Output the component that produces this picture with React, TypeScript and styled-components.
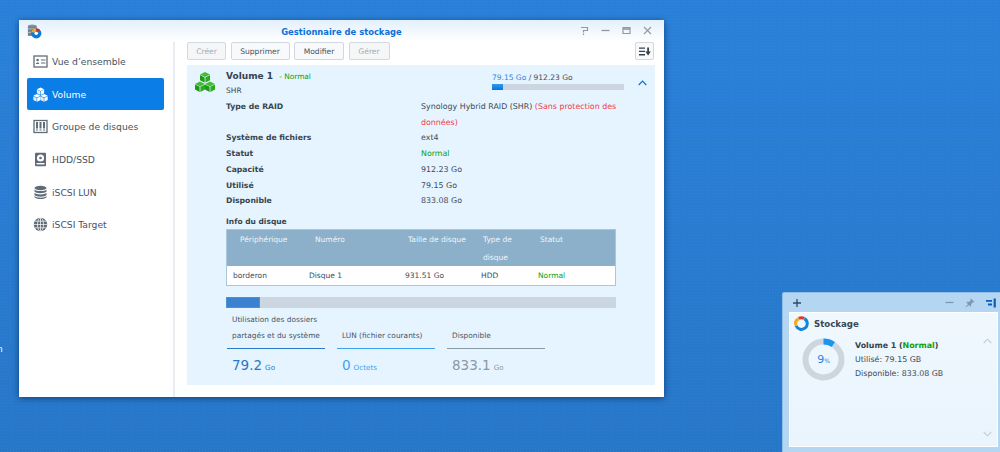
import { FC, ReactNode } from 'react';
import styled, { createGlobalStyle } from 'styled-components';

const GlobalStyle = createGlobalStyle`
  html, body {
    margin: 0;
    padding: 0;
    height: 100%;
  }
  #root {
    height: 100%;
  }
  body {
    font-family: 'DejaVu Sans', Verdana, sans-serif;
    color: #3d4a56;
  }
`;

const Desktop = styled.div`
  position: relative;
  width: 1000px;
  height: 452px;
  overflow: hidden;
  background-color: #2a80d8;
  background-image:
    linear-gradient(180deg, rgba(0, 0, 0, 0), rgba(0, 0, 0, 0.07)),
    radial-gradient(rgba(255, 255, 255, 0.04) 1px, transparent 1px);
  background-size: 100% 100%, 3px 3px;
`;

const DesktopLabel = styled.span`
  position: absolute;
  left: -3px;
  top: 344px;
  font-size: 9px;
  color: #fff;
`;

const Window = styled.section`
  position: absolute;
  left: 19px;
  top: 20px;
  width: 645px;
  height: 377px;
  display: flex;
  flex-direction: column;
  background: #fff;
  border-radius: 2px 2px 0 0;
  box-shadow: 0 1px 6px rgba(0, 30, 80, 0.65);
`;

const TitleBar = styled.header`
  position: relative;
  height: 22px;
  box-sizing: border-box;
  flex: none;
  display: flex;
  align-items: center;
  justify-content: center;
  padding-top: 1px;
  background: linear-gradient(180deg, #e3f0fb 0%, #ffffff 100%);
`;

const Title = styled.h1`
  margin: 0;
  font-size: 8.4px;
  font-weight: 700;
  color: #0a70d8;
`;

const AppIcon = styled.svg`
  position: absolute;
  left: 8px;
  top: 4px;
  width: 15px;
  height: 15px;
`;

const WindowControls = styled.div`
  position: absolute;
  right: 12px;
  top: 6px;
  display: flex;
  gap: 12px;
  color: #8d99a5;
`;

const Body = styled.div`
  flex: 1;
  display: flex;
  min-height: 0;
`;

const Sidebar = styled.nav`
  width: 156px;
  flex: none;
  display: flex;
  flex-direction: column;
  gap: 0.7px;
  padding: 3.5px 9px 0 8px;
  box-sizing: border-box;
  border-right: 2px solid #e9edf1;
`;

const NavItem = styled.div<{ $active?: boolean }>`
  height: 32px;
  flex: none;
  display: flex;
  align-items: center;
  gap: 4px;
  padding-left: 6px;
  border-radius: 2px;
  font-size: 9.2px;
  color: ${(p) => (p.$active ? '#fff' : '#47535f')};
  background: ${(p) => (p.$active ? '#0a7de6' : 'transparent')};
`;

const NavIcon = styled.svg`
  width: 15px;
  height: 15px;
  flex: none;
`;

const Main = styled.main`
  flex: 1;
  min-width: 0;
  display: flex;
  flex-direction: column;
  padding: 0 9px 12px 12px;
`;

const Toolbar = styled.div`
  height: 18px;
  flex: none;
  display: flex;
  gap: 4.5px;
  margin-bottom: 5px;
`;

const Button = styled.button<{ $w: number; $disabled?: boolean }>`
  width: ${(p) => p.$w}px;
  height: 18px;
  padding: 0;
  box-sizing: border-box;
  border: 1px solid #d0d9e1;
  border-radius: 2px;
  font-family: inherit;
  font-size: 7.6px;
  color: ${(p) => (p.$disabled ? '#a3adb6' : '#47535f')};
  background: ${(p) => (p.$disabled ? '#f4f6f8' : '#f8f9fa')};
`;

const SortButton = styled(Button)`
  margin-left: auto;
  margin-right: 1px;
  display: flex;
  align-items: center;
  justify-content: center;
`;

const Panel = styled.div`
  flex: 1;
  background: #e5f4ff;
  padding: 0 11px 0 8px;
  font-size: 7.5px;
`;

const VolumeHead = styled.div`
  display: grid;
  grid-template-columns: 31px 266px 132px 1fr;
  height: 34px;
`;

const CubeIcon = styled.svg`
  width: 20px;
  height: 20px;
  margin-top: 7px;
`;

const VolumeTitle = styled.div`
  margin-top: 5px;
  font-size: 9px;
  font-weight: 700;
  color: #36424e;
  line-height: 12px;

  small {
    margin-left: 3px;
    font-size: 7.4px;
    font-weight: 400;
    color: #0ca00c;
  }
`;

const VolumeType = styled.div`
  margin-top: 3px;
  line-height: 10px;
`;

const Usage = styled.div`
  padding-top: 8px;
  line-height: 10px;
  b {
    font-weight: 400;
    color: #1a86e6;
  }
`;

const MiniTrack = styled.div`
  height: 6px;
  margin-top: 1px;
  background: #cbd6e0;
`;

const MiniFill = styled.div`
  height: 100%;
  background: linear-gradient(180deg, #2f9bf2, #0a72d6);
`;

const Collapse = styled.svg`
  width: 9px;
  height: 6px;
  margin: 15px 0 0 14px;
`;

const DetailGrid = styled.dl`
  display: grid;
  grid-template-columns: 195px 1fr;
  margin: 0 0 0 31px;
  width: 400px;
  line-height: 15.7px;

  dt {
    font-size: 7.7px;
    font-weight: 700;
    color: #38444f;
  }
  dd {
    margin: 0;
    font-size: 7.9px;
  }
`;

const Warn = styled.span`
  color: #f23c4c;
`;

const Ok = styled.span`
  color: #0ca00c;
`;

const Section = styled.div`
  margin-left: 31px;
  width: 390px;
`;

const SectionTitle = styled.div`
  margin-top: 7px;
  font-size: 7.5px;
  font-weight: 700;
  color: #38444f;
  line-height: 11px;
`;

const DiskTable = styled.div`
  margin-top: 2px;
  border: 1px solid #a9c6dc;
`;

const COLS = '76px 96px 76px 57px 1fr';

const TableHead = styled.div`
  display: grid;
  grid-template-columns: ${COLS};
  height: 36px;
  box-sizing: border-box;
  padding: 1px 0 0 6px;
  background: #8cb0ca;
  color: #eef5fa;
  line-height: 18px;
`;

const HeadCell = styled.div<{ $pad: number }>`
  padding-left: ${(p) => p.$pad}px;
`;

const TableRow = styled.div`
  display: grid;
  grid-template-columns: ${COLS};
  height: 19px;
  box-sizing: border-box;
  padding: 1px 0 0 6px;
  align-items: center;
  background: #fff;
`;

const BigTrack = styled.div`
  height: 11px;
  margin-top: 11px;
  background: #ccd6e0;
`;

const BigFill = styled.div`
  height: 100%;
  box-sizing: border-box;
  border: 1px solid #4a92d8;
  background: #3a82d0;
`;

const Stats = styled.div`
  display: grid;
  grid-template-columns: 98px 98px 98px;
  gap: 0 12px;
  margin: 4px 0 0 1px;
`;

const Stat = styled.div<{ $c: string }>`
  display: flex;
  flex-direction: column;
  justify-content: flex-end;
  color: #47535f;

  p {
    margin: 0;
    padding: 0 0 5px 5px;
    font-size: 7.4px;
    line-height: 15.7px;
    border-bottom: 1px solid ${(p) => p.$c};
  }
  div {
    padding: 8px 0 0 5px;
    height: 22px;
    line-height: 16px;
    font-size: 7.2px;
    color: ${(p) => p.$c};
  }
  strong {
    font-size: 13.5px;
    font-weight: 400;
    margin-right: 3px;
  }
`;

const Widget = styled.aside`
  position: absolute;
  left: 782px;
  top: 292px;
  width: 222px;
  height: 170px;
  display: flex;
  flex-direction: column;
  padding: 0 7px 0 6px;
  box-sizing: border-box;
  background: #b4d6f3;
  border: 1px solid #8fbde6;
  border-radius: 2px 0 0 0;
`;

const WidgetBar = styled.div`
  height: 19px;
  flex: none;
  display: flex;
  align-items: center;
  justify-content: space-between;
  padding-left: 3px;
`;

const WidgetTools = styled.div`
  display: flex;
  align-items: center;
  gap: 11px;
`;

const WidgetCard = styled.div`
  position: relative;
  width: 209px;
  height: 135px;
  box-sizing: border-box;
  padding: 3px 4px;
  background: linear-gradient(180deg, #f0f8fe, #e9f4fd);
  border: 1px solid #fff;
  font-size: 7.9px;
`;

const WidgetTitle = styled.div`
  display: flex;
  align-items: center;
  gap: 5px;
  font-size: 8.6px;
  font-weight: 700;
  color: #3a4652;
`;

const WidgetRow = styled.div`
  display: flex;
  gap: 10px;
  margin-top: 7px;
  padding-left: 8px;
`;

const Donut = styled.div`
  position: relative;
  width: 43px;
  height: 43px;
  flex: none;
`;

const DonutLabel = styled.div`
  position: absolute;
  inset: 0;
  display: flex;
  align-items: center;
  justify-content: center;
  font-size: 11px;
  color: #1a86e6;

  small {
    font-size: 6px;
    margin-top: 2px;
  }
`;

const WidgetText = styled.div`
  padding-top: 1px;
  line-height: 14.2px;
  b {
    color: #36424e;
  }
`;

const Chevron = styled.svg<{ $bottom?: boolean }>`
  position: absolute;
  right: 5px;
  width: 9px;
  height: 6px;
  ${(p) => (p.$bottom ? 'bottom: 9px;' : 'top: 25px;')}
`;

const Nav: FC<{ label: string; active?: boolean; children: ReactNode }> = ({ label, active, children }) => (
  <NavItem $active={active}>
    <NavIcon viewBox='0 0 15 15'>{children}</NavIcon>
    <span>{label}</span>
  </NavItem>
);

const Cube: FC<{ x: number; y: number; s?: number; top: string; left: string; right: string }> = ({
  x,
  y,
  s = 1,
  top,
  left,
  right,
}) => (
  <g transform={`translate(${x} ${y}) scale(${s})`}>
    <path d='M5 0 10 2.5 5 5 0 2.5Z' fill={top} />
    <path d='M0 3 4.6 5.4V10.6L0 8.2Z' fill={left} />
    <path d='M10 3 5.4 5.4V10.6L10 8.2Z' fill={right} />
  </g>
);

const App: FC = () => {
  const grey = '#5f6b77';
  return (
    <Desktop>
      <GlobalStyle />
      <DesktopLabel>n</DesktopLabel>

      <Window>
        <TitleBar>
          <AppIcon viewBox='0 0 17 17'>
            <ellipse cx='6' cy='2.5' rx='5' ry='1.8' fill='#8a97a3' />
            <rect x='1' y='2.5' width='10' height='11' fill='#76838f' />
            <rect x='1' y='5' width='10' height='1' fill='#b4bec7' />
            <rect x='1' y='9' width='10' height='1' fill='#b4bec7' />
            <circle cx='10.5' cy='10.5' r='5.8' fill='#0e7ad8' />
            <circle cx='10.5' cy='10.5' r='2' fill='#fff' />
            <path d='M10.5 4.7A5.8 5.8 0 0 0 5 9L8.5 10A2 2 0 0 1 10.5 8.5Z' fill='#f5a81c' />
            <path d='M10.5 4.7A5.8 5.8 0 0 1 14.6 6.4L11.9 9.1A2 2 0 0 0 10.5 8.5Z' fill='#e02a20' />
          </AppIcon>
          <Title>Gestionnaire de stockage</Title>
          <WindowControls>
            <svg width='9' height='9' viewBox='0 0 9 9' fill='none' stroke='currentColor' strokeWidth='1.2'>
              <path d='M1 1.5H7.5V4.5H3.5V6.5M3.5 7.5V9' />
            </svg>
            <svg width='9' height='9' viewBox='0 0 9 9' fill='none' stroke='currentColor' strokeWidth='1.3'>
              <path d='M0.5 4.5H8.5' />
            </svg>
            <svg width='9' height='9' viewBox='0 0 9 9' fill='none' stroke='currentColor' strokeWidth='1.2'>
              <path d='M1 1.5H8V7.5H1Z' />
              <path d='M1 3H8' strokeWidth='1.6' />
            </svg>
            <svg width='9' height='9' viewBox='0 0 9 9' fill='none' stroke='currentColor' strokeWidth='1.1'>
              <path d='M1 1 8 8M8 1 1 8' />
            </svg>
          </WindowControls>
        </TitleBar>

        <Body>
          <Sidebar>
            <Nav label='Vue d’ensemble'>
              <rect x='1' y='2' width='13' height='11' fill='none' stroke={grey} strokeWidth='1.3' />
              <circle cx='4.6' cy='6' r='1.3' fill={grey} />
              <path d='M3 10C3 8 6.2 8 6.2 10ZM8 5.5H12.5V6.6H8ZM8 8.5H12.5V9.6H8Z' fill={grey} />
            </Nav>
            <Nav label='Volume' active>
              <Cube x={3.9} y={0.4} s={0.72} top='#fff' left='#dcecfb' right='#fff' />
              <Cube x={0.3} y={7} s={0.72} top='#fff' left='#dcecfb' right='#fff' />
              <Cube x={7.5} y={7} s={0.72} top='#fff' left='#dcecfb' right='#fff' />
            </Nav>
            <Nav label='Groupe de disques'>
              <rect x='1' y='1.5' width='13' height='12' fill='none' stroke={grey} strokeWidth='1.3' />
              <path d='M3 3H5V9.5H3ZM6.5 3H8.5V9.5H6.5ZM10 3H12V9.5H10Z' fill={grey} />
              <path d='M3 11H5M6.5 11H8.5M10 11H12' stroke={grey} strokeWidth='1.2' />
            </Nav>
            <Nav label='HDD/SSD'>
              <rect x='2' y='0.8' width='11' height='13.4' rx='1' fill={grey} />
              <circle cx='7.5' cy='6' r='3.6' fill='#fff' />
              <circle cx='7.5' cy='6' r='1.3' fill={grey} />
              <rect x='3.5' y='11' width='8' height='1.4' fill='#fff' />
            </Nav>
            <Nav label='iSCSI LUN'>
              <ellipse cx='7.5' cy='3' rx='6' ry='2.2' fill={grey} />
              <path d='M1.5 4.4C3 6.6 12 6.6 13.5 4.4V6.6C12 8.8 3 8.8 1.5 6.6Z' fill={grey} />
              <path d='M1.5 7.8C3 10 12 10 13.5 7.8V10C12 12.2 3 12.2 1.5 10Z' fill={grey} />
              <path d='M1.5 11C3 13.2 12 13.2 13.5 11V12.2C12 14.6 3 14.6 1.5 12.2Z' fill={grey} />
            </Nav>
            <Nav label='iSCSI Target'>
              <circle cx='7.5' cy='7.5' r='6.7' fill={grey} />
              <g fill='none' stroke='#fff' strokeWidth='0.7'>
                <ellipse cx='7.5' cy='7.5' rx='3' ry='6.7' />
                <path d='M7.5 0.8V14.2M0.8 7.5H14.2M1.8 4.2H13.2M1.8 10.8H13.2' />
              </g>
            </Nav>
          </Sidebar>

          <Main>
            <Toolbar>
              <Button $w={39} $disabled>Créer</Button>
              <Button $w={59}>Supprimer</Button>
              <Button $w={50}>Modifier</Button>
              <Button $w={41} $disabled>Gérer</Button>
              <SortButton $w={19}>
                <svg width='12' height='9' viewBox='0 0 12 9' fill='#36424e'>
                  <path d='M0 0.5H6V1.8H0ZM0 3.8H6V5.1H0ZM0 7.1H6V8.4H0ZM8.2 0.5H10V4.5H11.8L9.1 8.6 6.4 4.5H8.2Z' />
                </svg>
              </SortButton>
            </Toolbar>

            <Panel>
              <VolumeHead>
                <CubeIcon viewBox='0 0 20 20'>
                  <Cube x={5} y={0} top='#45bd33' left='#1f9a18' right='#2bab22' />
                  <Cube x={0} y={9.4} top='#45bd33' left='#1f9a18' right='#2bab22' />
                  <Cube x={10} y={9.4} top='#45bd33' left='#1f9a18' right='#2bab22' />
                </CubeIcon>
                <div>
                  <VolumeTitle>
                    Volume 1 <small>- Normal</small>
                  </VolumeTitle>
                  <VolumeType>SHR</VolumeType>
                </div>
                <Usage>
                  <b>79.15 Go</b> / 912.23 Go
                  <MiniTrack>
                    <MiniFill style={{ width: `${(79.15 / 912.23) * 100}%` }} />
                  </MiniTrack>
                </Usage>
                <Collapse viewBox='0 0 9 6' fill='none' stroke='#0a70d8' strokeWidth='1.2'>
                  <path d='M0.7 5 4.5 1.2 8.3 5' />
                </Collapse>
              </VolumeHead>

              <DetailGrid>
                <dt>Type de RAID</dt>
                <dd>
                  Synology Hybrid RAID (SHR) <Warn>(Sans protection des données)</Warn>
                </dd>
                <dt>Système de fichiers</dt>
                <dd>ext4</dd>
                <dt>Statut</dt>
                <dd>
                  <Ok>Normal</Ok>
                </dd>
                <dt>Capacité</dt>
                <dd>912.23 Go</dd>
                <dt>Utilisé</dt>
                <dd>79.15 Go</dd>
                <dt>Disponible</dt>
                <dd>833.08 Go</dd>
              </DetailGrid>

              <Section>
                <SectionTitle>Info du disque</SectionTitle>
                <DiskTable>
                  <TableHead>
                    <HeadCell $pad={7}>Périphérique</HeadCell>
                    <HeadCell $pad={6}>Numéro</HeadCell>
                    <HeadCell $pad={3}>Taille de disque</HeadCell>
                    <HeadCell $pad={2}>Type de disque</HeadCell>
                    <HeadCell $pad={2}>Statut</HeadCell>
                  </TableHead>
                  <TableRow>
                    <div>borderon</div>
                    <div>Disque 1</div>
                    <div>931.51 Go</div>
                    <div>HDD</div>
                    <Ok>Normal</Ok>
                  </TableRow>
                </DiskTable>
                <BigTrack>
                  <BigFill style={{ width: `${(79.2 / 912.23) * 100}%` }} />
                </BigTrack>
                <Stats>
                  <Stat $c='#2a78c8'>
                    <p>Utilisation des dossiers partagés et du système</p>
                    <div>
                      <strong>79.2</strong>Go
                    </div>
                  </Stat>
                  <Stat $c='#3ba3f0'>
                    <p>LUN (fichier courants)</p>
                    <div>
                      <strong>0</strong>Octets
                    </div>
                  </Stat>
                  <Stat $c='#8b98a5'>
                    <p>Disponible</p>
                    <div>
                      <strong>833.1</strong>Go
                    </div>
                  </Stat>
                </Stats>
              </Section>
            </Panel>
          </Main>
        </Body>
      </Window>

      <Widget>
        <WidgetBar>
          <svg width='10' height='10' viewBox='0 0 10 10' stroke='#2f4a63' strokeWidth='1.3'>
            <path d='M5 1V9M1 5H9' />
          </svg>
          <WidgetTools>
            <svg width='9' height='9' viewBox='0 0 9 9' stroke='#8297ab' strokeWidth='1.3'>
              <path d='M0.5 4.5H8.5' />
            </svg>
            <svg width='10' height='10' viewBox='0 0 10 10' fill='#8297ab'>
              <path d='M6 0.5 9.5 4 8.5 4.6 7.8 4.2 6 6.2 6.2 8 5.4 8.6 1.4 4.6 2 3.8 3.8 4 5.8 2.2 5.4 1.5ZM3 6 3.9 6.9 0.8 9.6 0.4 9.2Z' />
            </svg>
            <svg width='10' height='10' viewBox='0 0 10 10' fill='#0a5fb4'>
              <path d='M0 2H6V3.8H0ZM2 5.6H6V7.4H2ZM7.6 0.5H9.8V9.5H7.6Z' />
            </svg>
          </WidgetTools>
        </WidgetBar>
        <WidgetCard>
          <WidgetTitle>
            <svg width='15' height='15' viewBox='0 0 15 15' fill='none' strokeWidth='3'>
              <path d='M2 9.5A5.8 5.8 0 0 1 4.6 2.6' stroke='#f5a81c' />
              <path d='M4.8 2.4A5.8 5.8 0 0 1 10.2 2.4' stroke='#e5352b' />
              <path d='M10.4 2.6A5.8 5.8 0 1 1 2.1 9.8' stroke='#1184dc' />
            </svg>
            Stockage
          </WidgetTitle>
          <WidgetRow>
            <Donut>
              <svg width='43' height='43' viewBox='0 0 43 43' fill='none' strokeWidth='6'>
                <circle cx='21.5' cy='21.5' r='18' stroke='#cdd6de' />
                <path d='M21.5 3.5A18 18 0 0 1 31.3 6.4' stroke='#1a95f0' />
              </svg>
              <DonutLabel>
                9<small>%</small>
              </DonutLabel>
            </Donut>
            <WidgetText>
              <b>
                Volume 1 (<Ok>Normal</Ok>)
              </b>
              <br />
              Utilisé: 79.15 GB
              <br />
              Disponible: 833.08 GB
            </WidgetText>
          </WidgetRow>
          <Chevron viewBox='0 0 9 6' fill='none' stroke='#c3ced8' strokeWidth='1.1'>
            <path d='M0.7 5 4.5 1.2 8.3 5' />
          </Chevron>
          <Chevron $bottom viewBox='0 0 9 6' fill='none' stroke='#c3ced8' strokeWidth='1.1'>
            <path d='M0.7 1 4.5 4.8 8.3 1' />
          </Chevron>
        </WidgetCard>
      </Widget>
    </Desktop>
  );
};

export default App;
